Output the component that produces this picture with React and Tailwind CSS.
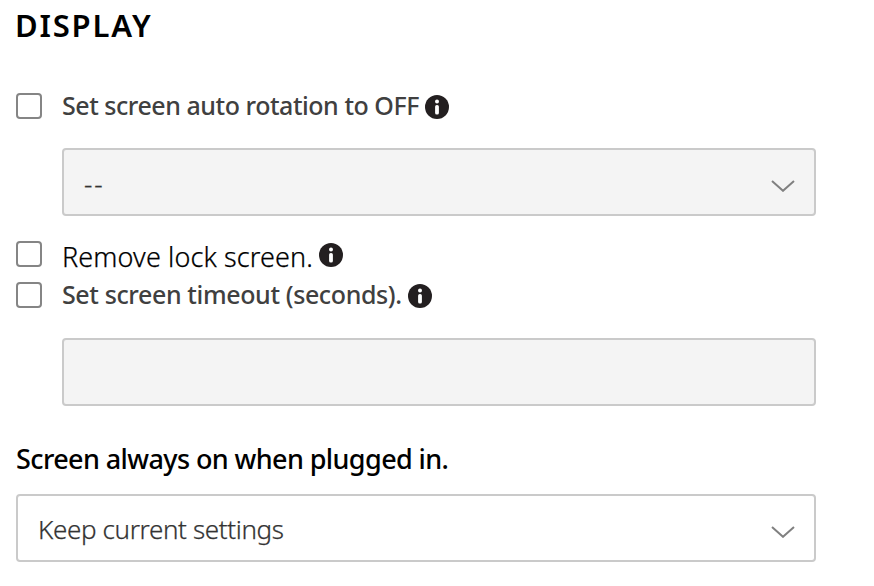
function InfoIcon({ className }) {
  return (
    <svg className={`h-6 w-6 shrink-0 ${className}`} viewBox="0 0 24 24" aria-label="Info">
      <circle cx="12" cy="12" r="12" fill="#231f20" />
      <circle cx="12" cy="6.5" r="2" fill="#fff" />
      <rect x="10.1" y="10" width="3.8" height="9.6" rx="1.7" fill="#fff" />
    </svg>
  );
}

function Chevron() {
  return (
    <svg className="mt-[8px] h-3 w-6 shrink-0" viewBox="0 0 24 12" fill="none">
      <path d="M1 1.1 L12 10.8 L23 1.1" stroke="#808080" strokeWidth="2" />
    </svg>
  );
}

function Checkbox() {
  return <span role="checkbox" aria-checked="false" className="h-[26px] w-[26px] shrink-0 rounded-[4px] border-2 border-[#858585] bg-white" />;
}

export default function App() {
  return (
    <main className="flex h-[586px] w-[874px] flex-col overflow-hidden bg-white pl-4 font-['Noto_Sans',sans-serif] whitespace-nowrap text-black">
      <h1 className="mt-2 -ml-px h-[34px] text-[31px] leading-[34px] font-semibold tracking-[1.8px]">DISPLAY</h1>

      <div className="mt-[51px] flex h-[26px] items-center">
        <Checkbox />
        <label className="mb-[2px] ml-5 w-[363px] text-[25px] leading-[25px] font-medium tracking-[-0.46px] text-[#404040]">Set screen auto rotation to OFF</label>
        <InfoIcon className="mt-[2px]" />
      </div>

      <div className="mt-[29px] ml-[46px] flex h-[68px] w-[754px] items-center justify-between rounded-[4px] border-2 border-[#cacaca] bg-[#f4f4f4] pr-[19px] pl-5 text-[26px] font-light text-[#333] [-webkit-text-stroke:0.25px]">
        <span className="mt-[4px] tracking-[2px]">--</span>
        <Chevron />
      </div>

      <div className="mt-[25px] flex h-[26px] items-center">
        <Checkbox />
        <label className="mt-[5px] ml-5 w-[257px] text-[27px] leading-[27px] font-light tracking-[0.12px] [-webkit-text-stroke:0.25px]">Remove lock screen.</label>
        <InfoIcon className="mt-[2px]" />
      </div>

      <div className="mt-[15px] flex h-[26px] items-center">
        <Checkbox />
        <label className="mb-[2px] ml-5 w-[346px] text-[25px] leading-[25px] font-medium tracking-[-0.38px] text-[#404040]">Set screen timeout (seconds).</label>
        <InfoIcon className="mt-[2px]" />
      </div>

      <div className="mt-[30px] ml-[46px] h-[68px] w-[754px] rounded-[4px] border-2 border-[#cacaca] bg-[#f4f4f4]" />

      <h2 className="mt-[36px] h-[34px] text-[27px] leading-[34px] font-medium tracking-[-0.6px]">Screen always on when plugged in.</h2>

      <div className="mt-[18px] flex h-[68px] w-[800px] items-center justify-between rounded-[4px] border-2 border-[#cacaca] bg-white pr-[19px] pl-5 text-[26px] font-light text-[#333] [-webkit-text-stroke:0.25px]">
        <span className="mt-[2px] tracking-[-0.36px]">Keep current settings</span>
        <Chevron />
      </div>
    </main>
  );
}
